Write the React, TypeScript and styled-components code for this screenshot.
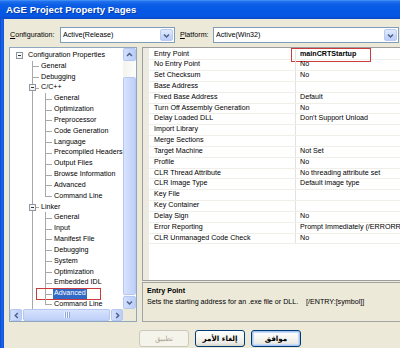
import React from 'react';
import styled, { createGlobalStyle, css } from 'styled-components';

const ROW = 10.84;
const LINE = '#A8A8A8';

const GlobalStyle = createGlobalStyle`
  html, body { margin: 0; padding: 0; background: #ECE9D8; }
  body {
    font-family: "Liberation Sans", Arial, sans-serif;
    font-size: 7.15px;
    color: #000;
    overflow: hidden;
  }
  #root { width: 400px; height: 348px; overflow: hidden; }
`;

const Window = styled.div`
  width: 400px;
  height: 348px;
  display: flex;
  flex-direction: column;
  overflow: hidden;
  background: #ECE9D8;
`;

const TitleBar = styled.div`
  flex: none;
  height: 19px;
  display: flex;
  align-items: center;
  padding-left: 6px;
  background: linear-gradient(
    to bottom,
    #4A97FA 0%,
    #2170EC 8%,
    #0C5EE6 25%,
    #0558E4 55%,
    #0656E2 85%,
    #0A47C8 100%
  );
  color: #fff;
  font-weight: bold;
  font-size: 9.6px;
  letter-spacing: 0.05px;
  text-shadow: 1px 1px 0 #0B3AA8;
  white-space: nowrap;
`;

const Body = styled.div`
  flex: 1;
  display: flex;
  min-height: 0;
`;

const Frame = styled.div`
  flex: none;
  width: 4px;
  background: linear-gradient(to right, #0845C6 0%, #1E68EC 45%, #0B52DA 100%);
`;

const Client = styled.div`
  flex: 1;
  min-width: 0;
  display: flex;
  flex-direction: column;
`;

const ConfigRow = styled.div`
  margin-top: 8px;
  height: 16px;
  display: flex;
  align-items: center;
  padding-left: 6px;
  white-space: nowrap;
`;

const FieldLabel = styled.span<{ $w: number; $gap?: number }>`
  flex: none;
  width: ${p => p.$w}px;
  margin-left: ${p => p.$gap ?? 0}px;
`;

const Combo = styled.div<{ $w: number }>`
  flex: none;
  width: ${p => p.$w}px;
  height: 16px;
  box-sizing: border-box;
  border: 1px solid #7F9DB9;
  background: #fff;
  display: flex;
  align-items: center;
  padding: 0 1px 0 2px;
`;

const ComboText = styled.span`
  flex: 1;
  min-width: 0;
  overflow: hidden;
`;

const DropButton = styled.span`
  flex: none;
  width: 13px;
  height: 12px;
  box-sizing: border-box;
  border: 1px solid #BACBF2;
  border-radius: 2px;
  background: linear-gradient(to bottom, #E2EBFE 0%, #C8D8FB 60%, #B9CDF8 100%);
  display: flex;
  align-items: center;
  justify-content: center;
`;

const Chevron = ({ dir = 'down' }: { dir?: 'down' | 'up' | 'left' | 'right' }) => {
  const pts: Record<string, string> = {
    down: '2,3.5 4.5,6 7,3.5',
    up: '2,6 4.5,3.5 7,6',
    left: '5.8,2 3.3,4.5 5.8,7',
    right: '3.2,2 5.7,4.5 3.2,7',
  };
  return (
    <svg width="9" height="9" viewBox="0 0 9 9">
      <polyline points={pts[dir]} fill="none" stroke="#4D6185" strokeWidth="1.5" />
    </svg>
  );
};

const Main = styled.div`
  margin-top: 4px;
  height: 275px;
  display: flex;
  gap: 5px;
  padding-left: 5px;
`;

/* ---------- Tree ---------- */

const Tree = styled.div`
  flex: none;
  width: 128px;
  box-sizing: border-box;
  border: 1px solid #8FA6BF;
  background: #fff;
  display: grid;
  grid-template-columns: 1fr 13px;
  grid-template-rows: 1fr 12px;
  overflow: hidden;
`;

const TreeBody = styled.div`
  padding: 2px 0 0 3px;
  overflow: hidden;
`;

const TreeRow = styled.div`
  height: ${ROW}px;
  display: flex;
  align-items: stretch;
  white-space: nowrap;
`;

type GuideKind = 'none' | 'through' | 'tee' | 'end';

const Guide = styled.span<{ $kind: GuideKind }>`
  flex: none;
  width: 13px;
  position: relative;
  ${p =>
    p.$kind !== 'none' &&
    css`
      &::before {
        content: '';
        position: absolute;
        left: 6px;
        top: 0;
        bottom: ${p.$kind === 'end' ? '50%' : '0'};
        border-left: 1px solid ${LINE};
      }
    `}
  ${p =>
    (p.$kind === 'tee' || p.$kind === 'end') &&
    css`
      &::after {
        content: '';
        position: absolute;
        left: 6px;
        width: 7px;
        top: 50%;
        border-top: 1px solid ${LINE};
      }
    `}
`;

const ExpandBox = styled.span`
  position: absolute;
  z-index: 1;
  left: 3px;
  top: calc(50% - 3.5px);
  width: 7px;
  height: 7px;
  box-sizing: border-box;
  border: 1px solid #8C97A5;
  background: linear-gradient(135deg, #fff 0%, #F0EFEA 100%);
  &::after {
    content: '';
    position: absolute;
    left: 1px;
    right: 1px;
    top: 2px;
    border-top: 1px solid #333;
  }
`;

const NodeLabel = styled.span<{ $sel?: boolean }>`
  position: relative;
  margin-left: 1px;
  padding: 0 1px;
  line-height: ${ROW}px;
  ${p =>
    p.$sel &&
    css`
      background: #316AC5;
      color: #fff;
    `}
`;

const MarkBox = styled.span<{ $l: number; $t: number; $w: number; $h: number }>`
  position: absolute;
  left: ${p => p.$l}px;
  top: ${p => p.$t}px;
  width: ${p => p.$w}px;
  height: ${p => p.$h}px;
  border: 1px solid #CC3B3B;
  box-sizing: border-box;
  pointer-events: none;
`;

const scrollFace = css`
  box-sizing: border-box;
  border: 1px solid #B4C8F2;
  border-radius: 2px;
  background: linear-gradient(to right, #D3E0FD 0%, #C6D6FB 50%, #BBCEF8 100%);
`;

const VScroll = styled.div`
  grid-row: 1;
  grid-column: 2;
  display: flex;
  flex-direction: column;
  background: #F4F3EE;
`;

const HScroll = styled.div`
  grid-row: 2;
  grid-column: 1;
  display: flex;
  background: #F4F3EE;
`;

const ScrollBtn = styled.span<{ $h?: boolean }>`
  ${scrollFace}
  flex: none;
  width: ${p => (p.$h ? 12 : 13)}px;
  height: ${p => (p.$h ? 12 : 13)}px;
  display: flex;
  align-items: center;
  justify-content: center;
`;

const ScrollTrack = styled.div<{ $h?: boolean }>`
  flex: 1;
  display: flex;
  flex-direction: ${p => (p.$h ? 'row' : 'column')};
  padding: ${p => (p.$h ? '0 1px' : '16px 0 1px')};
  background: linear-gradient(${p => (p.$h ? 'to bottom' : 'to right')}, #F3F3EF, #FDFDFB);
`;

const Thumb = styled.div<{ $h?: boolean }>`
  ${scrollFace}
  flex: 1;
  display: flex;
  align-items: center;
  justify-content: center;
  background: linear-gradient(${p => (p.$h ? 'to bottom' : 'to right')}, #D8E3FD 0%, #C9D8FB 50%, #BFD0F8 100%);
`;

const Grip = styled.span`
  width: 6px;
  height: 6px;
  background: repeating-linear-gradient(to right, #EEF3FF 0 1px, #8FA9E0 1px 2px);
`;

const Corner = styled.div`
  grid-row: 2;
  grid-column: 2;
  background: #ECE9D8;
`;

/* ---------- Property grid ---------- */

const RightCol = styled.div`
  flex: 1;
  min-width: 0;
  display: flex;
  flex-direction: column;
  gap: 1px;
`;

const PropGrid = styled.div`
  height: 234px;
  box-sizing: border-box;
  border: 1px solid #9D9D9D;
  border-right: none;
  background: #fff;
  display: flex;
`;

const Gutter = styled.div`
  flex: none;
  width: 6px;
  background: #EDEBE1;
`;

const PropRows = styled.div`
  flex: 1;
  min-width: 0;
  padding-top: 1.5px;
`;

const PropRow = styled.div`
  height: ${ROW}px;
  box-sizing: border-box;
  display: grid;
  grid-template-columns: 146px 1fr;
  border-bottom: 1px solid #EFEEE8;
  white-space: nowrap;
`;

const NameCell = styled.span`
  padding-left: 5px;
  line-height: ${ROW - 1}px;
  overflow: hidden;
`;

const ValueCell = styled.span<{ $bold?: boolean }>`
  position: relative;
  border-left: 1px solid #E4E2D9;
  padding-left: 4px;
  line-height: ${ROW - 1}px;
  font-weight: ${p => (p.$bold ? 'bold' : 'normal')};
`;

const Description = styled.div`
  height: 40px;
  box-sizing: border-box;
  border: 1px solid #A3A3A3;
  border-right: none;
  background: #ECE9D8;
  padding: 3px 0 0 4px;
  white-space: nowrap;
`;

const DescTitle = styled.div`
  font-weight: bold;
  line-height: 10.6px;
`;

const DescText = styled.div`
  line-height: 10.6px;
`;

const DescMain = styled.span`
  display: inline-block;
  width: 159px;
`;

/* ---------- Buttons ---------- */

const ButtonRow = styled.div`
  margin-top: 8px;
  height: 17px;
  display: flex;
  gap: 6px;
  padding-left: 135px;
`;

const DlgButton = styled.button<{ $default?: boolean }>`
  flex: none;
  width: 50px;
  height: 17px;
  box-sizing: border-box;
  padding: 0;
  border: 1px solid #003C74;
  border-radius: 3px;
  background: linear-gradient(to bottom, #FFFFFF 0%, #F7F7F4 40%, #ECEBE6 80%, #D9D5C8 100%);
  font-family: "DejaVu Sans", "Noto Sans", sans-serif;
  font-size: 7.2px;
  font-weight: bold;
  color: #000;
  display: flex;
  align-items: center;
  justify-content: center;
  ${p =>
    p.$default &&
    css`
      box-shadow: inset 0 0 0 1px #A9C4F2, inset 0 0 0 2px #C9DBFA;
    `}
  &:disabled {
    border-color: #CAC8BB;
    background: #F5F4EA;
    color: #ACA899;
    font-weight: normal;
  }
`;

/* ---------- Data ---------- */

type TreeNode = {
  label: string;
  guides: GuideKind[];
  box?: boolean;
  selected?: boolean;
  mark?: boolean;
};

const cc = ['General', 'Optimization', 'Preprocessor', 'Code Generation', 'Language', 'Precompiled Headers', 'Output Files', 'Browse Information', 'Advanced', 'Command Line'];
const lk = ['General', 'Input', 'Manifest File', 'Debugging', 'System', 'Optimization', 'Embedded IDL', 'Advanced', 'Command Line'];

const treeNodes: TreeNode[] = [
  { label: 'Configuration Properties', guides: ['none'], box: true },
  { label: 'General', guides: ['none', 'tee'] },
  { label: 'Debugging', guides: ['none', 'tee'] },
  { label: 'C/C++', guides: ['none', 'tee'], box: true },
  ...cc.map((l, i) => ({ label: l, guides: ['none', 'through', i === cc.length - 1 ? 'end' : 'tee'] as GuideKind[] })),
  { label: 'Linker', guides: ['none', 'tee'], box: true },
  ...lk.map((l, i) => ({
    label: l,
    guides: ['none', 'through', i === lk.length - 1 ? 'end' : 'tee'] as GuideKind[],
    selected: l === 'Advanced',
    mark: l === 'Advanced',
  })),
];

const props: [string, string, boolean?][] = [
  ['Entry Point', 'mainCRTStartup', true],
  ['No Entry Point', 'No'],
  ['Set Checksum', 'No'],
  ['Base Address', ''],
  ['Fixed Base Address', 'Default'],
  ['Turn Off Assembly Generation', 'No'],
  ['Delay Loaded DLL', "Don't Support Unload"],
  ['Import Library', ''],
  ['Merge Sections', ''],
  ['Target Machine', 'Not Set'],
  ['Profile', 'No'],
  ['CLR Thread Attribute', 'No threading attribute set'],
  ['CLR Image Type', 'Default image type'],
  ['Key File', ''],
  ['Key Container', ''],
  ['Delay Sign', 'No'],
  ['Error Reporting', 'Prompt Immediately (/ERRORR'],
  ['CLR Unmanaged Code Check', 'No'],
];

export default function App() {
  return (
    <>
      <GlobalStyle />
      <Window>
        <TitleBar>AGE Project Property Pages</TitleBar>
        <Body>
          <Frame />
          <Client>
            <ConfigRow>
              <FieldLabel $w={50}>
                <u>C</u>onfiguration:
              </FieldLabel>
              <Combo $w={115}>
                <ComboText>Active(Release)</ComboText>
                <DropButton>
                  <Chevron />
                </DropButton>
              </Combo>
              <FieldLabel $w={33} $gap={5}>
                <u>P</u>latform:
              </FieldLabel>
              <Combo $w={186}>
                <ComboText>Active(Win32)</ComboText>
                <DropButton>
                  <Chevron />
                </DropButton>
              </Combo>
            </ConfigRow>

            <Main>
              <Tree>
                <TreeBody>
                  {treeNodes.map((n, i) => (
                    <TreeRow key={i}>
                      {n.guides.map((g, j) => (
                        <Guide key={j} $kind={g}>
                          {n.box && j === n.guides.length - 1 && <ExpandBox />}
                        </Guide>
                      ))}
                      <NodeLabel $sel={n.selected}>
                        {n.label}
                        {n.mark && <MarkBox $l={-17} $t={0} $w={65} $h={12} />}
                      </NodeLabel>
                    </TreeRow>
                  ))}
                </TreeBody>
                <VScroll>
                  <ScrollBtn>
                    <Chevron dir="up" />
                  </ScrollBtn>
                  <ScrollTrack>
                    <Thumb />
                  </ScrollTrack>
                  <ScrollBtn>
                    <Chevron dir="down" />
                  </ScrollBtn>
                </VScroll>
                <HScroll>
                  <ScrollBtn $h>
                    <Chevron dir="left" />
                  </ScrollBtn>
                  <ScrollTrack $h>
                    <Thumb $h>
                      <Grip />
                    </Thumb>
                  </ScrollTrack>
                  <ScrollBtn $h>
                    <Chevron dir="right" />
                  </ScrollBtn>
                </HScroll>
                <Corner />
              </Tree>

              <RightCol>
                <PropGrid>
                  <Gutter />
                  <PropRows>
                    {props.map(([name, value, bold], i) => (
                      <PropRow key={i}>
                        <NameCell>{name}</NameCell>
                        <ValueCell $bold={bold}>
                          {value}
                          {i === 0 && <MarkBox $l={-5} $t={-1.5} $w={80} $h={14} />}
                        </ValueCell>
                      </PropRow>
                    ))}
                  </PropRows>
                </PropGrid>
                <Description>
                  <DescTitle>Entry Point</DescTitle>
                  <DescText>
                    <DescMain>Sets the starting address for an .exe file or DLL.</DescMain>
                    [/ENTRY:[symbol]]
                  </DescText>
                </Description>
              </RightCol>
            </Main>

            <ButtonRow>
              <DlgButton disabled>تطبيق</DlgButton>
              <DlgButton>إلغاء الأمر</DlgButton>
              <DlgButton $default>موافق</DlgButton>
            </ButtonRow>
          </Client>
        </Body>
      </Window>
    </>
  );
}
